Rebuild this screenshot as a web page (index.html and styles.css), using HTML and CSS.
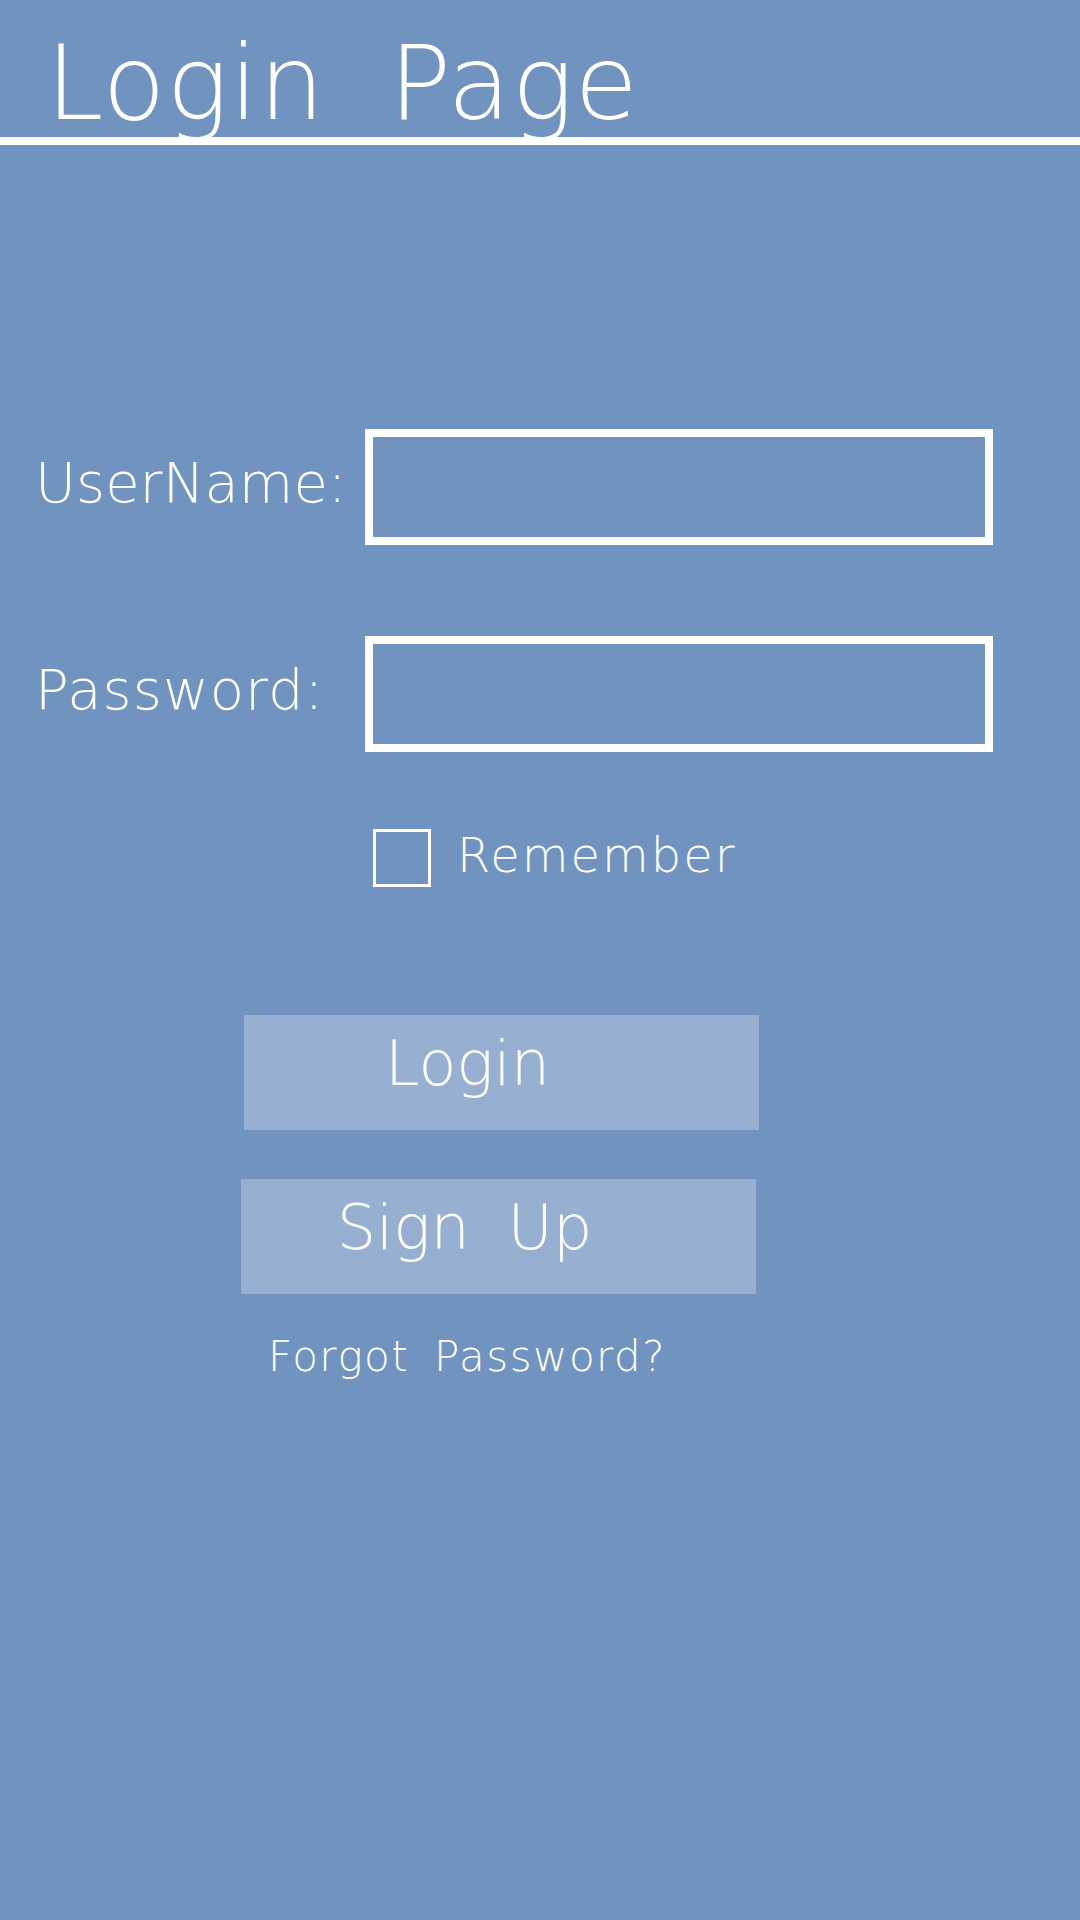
FILE: index.html
```html
<!DOCTYPE html>
<html lang="en">
<head>
<meta charset="utf-8">
<title>Login Page</title>
<link rel="stylesheet" href="styles.css">
</head>
<body>
<header class="header">
  <h1 class="title">Login Page</h1>
</header>
<main class="form">
  <div class="row row-user">
    <label class="label" for="user">UserName:</label>
    <div class="field" id="user"></div>
  </div>
  <div class="row row-pass">
    <label class="label label-pass" for="pass">Password:</label>
    <div class="field" id="pass"></div>
  </div>
  <div class="remember">
    <span class="check"></span>
    <span class="remember-text">Remember</span>
  </div>
  <div class="btn btn-login">Login</div>
  <div class="btn btn-signup">Sign Up</div>
  <div class="forgot">Forgot Password?</div>
</main>
</body>
</html>
```

FILE: styles.css
```css
html, body {
  margin: 0;
  padding: 0;
}
body {
  width: 1080px;
  height: 1920px;
  background: #7093bf;
  color: #ffffff;
  font-family: "DejaVu Sans", "Liberation Sans", sans-serif;
  font-weight: 200;
  overflow: hidden;
}
.header {
  border-bottom: 8px solid #ffffff;
  padding: 32px 0 2px 46px;
}
.title {
  margin: 0;
  font-size: 103px;
  line-height: 103px;
  font-weight: 200;
  letter-spacing: 1px;
  word-spacing: 30px;
}
.form {
  display: flex;
  flex-direction: column;
  padding-top: 284px;
}
.row {
  display: flex;
  align-items: center;
  padding-left: 35px;
}
.row-pass {
  margin-top: 91px;
}
.label {
  width: 330px;
  font-size: 56px;
  line-height: 56px;
  padding-bottom: 8px;
}
.label-pass {
  letter-spacing: 1px;
}
.field {
  width: 612px;
  height: 100px;
  border: 8px solid #ffffff;
}
.remember {
  display: flex;
  align-items: center;
  margin-top: 77px;
  padding-left: 373px;
}
.check {
  width: 52px;
  height: 52px;
  border: 3.5px solid #ffffff;
}
.remember-text {
  margin-left: 26px;
  font-size: 48px;
  line-height: 48px;
  letter-spacing: 2px;
  padding-bottom: 6px;
}
.btn {
  width: 515px;
  height: 115px;
  background: #97afd1;
  display: flex;
  align-items: center;
  justify-content: center;
  box-sizing: border-box;
  padding: 0 68px 18px 0;
  font-size: 62px;
  line-height: 62px;
  word-spacing: 18px;
}
.btn-login {
  margin: 128px 0 0 244px;
}
.btn-signup {
  margin: 49px 0 0 241px;
}
.forgot {
  margin: 42px 0 0 268px;
  font-size: 42px;
  line-height: 42px;
  letter-spacing: 1.5px;
  word-spacing: 10px;
}
```
